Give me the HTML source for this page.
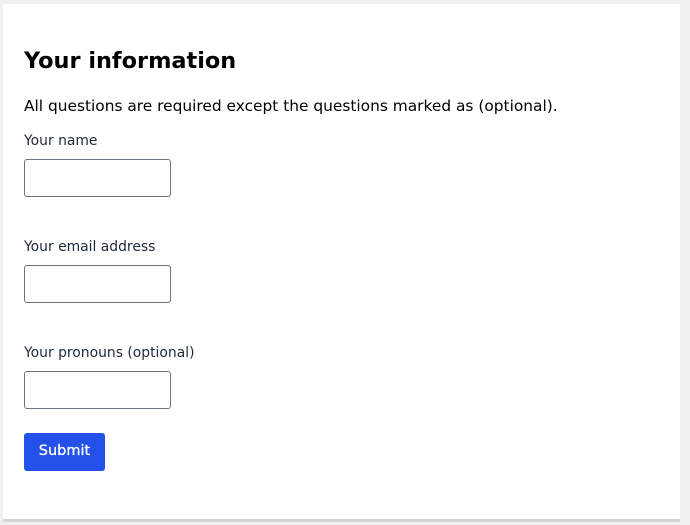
<!DOCTYPE html>
<html><head><style>
html,body{margin:0;padding:0;width:690px;height:525px;background:#f0f0f0;overflow:hidden;font-family:"DejaVu Sans","Liberation Sans",sans-serif;}
.panel{position:absolute;left:3px;top:4px;width:677px;height:515px;background:#fff;border-bottom:3px solid #d4d4d4;}
.a{position:absolute;white-space:nowrap;}
h1{position:absolute;left:21px;top:42px;margin:0;font-size:22.4px;font-weight:bold;color:#000;line-height:30px;}
.p{left:21px;top:92px;font-size:15.4px;color:#000;line-height:20px;}
.l{left:21px;font-size:13.9px;color:#1e293b;line-height:18px;}
.in{position:absolute;left:21px;width:145px;height:36px;border:1px solid #6b7280;border-radius:3px;background:#fff;}
.btn{position:absolute;left:21px;top:429px;width:81px;height:38px;background:#2250e8;border-radius:3px;color:#fff;font-size:14.5px;font-weight:normal;text-align:center;line-height:37px;-webkit-text-stroke:0.3px #fff;}
</style></head><body>
<div class="panel">
<h1>Your information</h1>
<div class="a p">All questions are required except the questions marked as (optional).</div>
<div class="a l" style="top:128px">Your name</div>
<div class="in" style="top:155px"></div>
<div class="a l" style="top:234px">Your email address</div>
<div class="in" style="top:261px"></div>
<div class="a l" style="top:340px">Your pronouns (optional)</div>
<div class="in" style="top:367px"></div>
<div class="btn">Submit</div>
</div>
</body></html>
